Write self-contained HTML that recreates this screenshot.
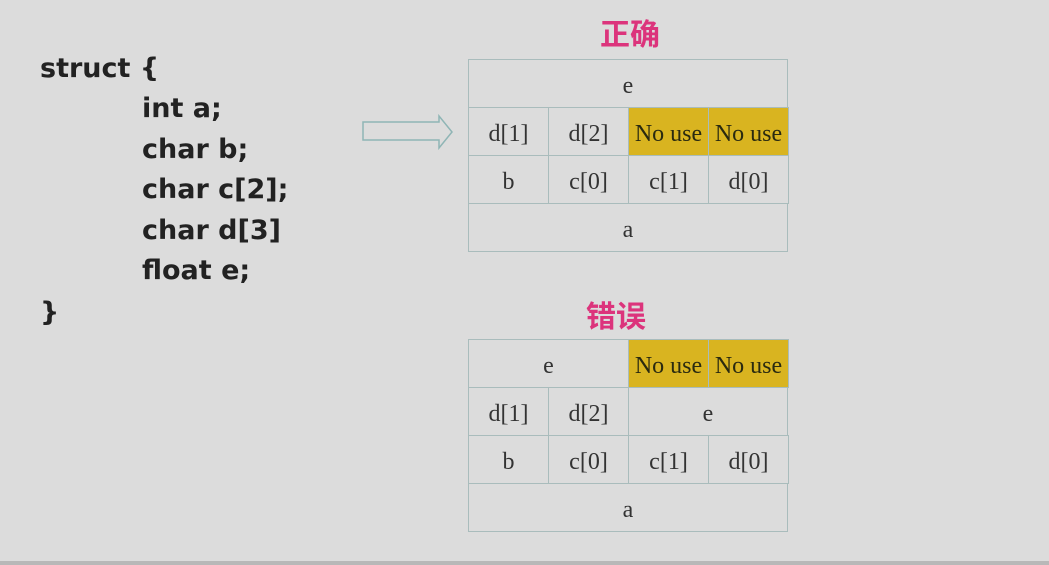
<!DOCTYPE html>
<html><head><meta charset="utf-8"><style>
body{margin:0;width:1049px;height:565px;background:#dcdcdc;position:relative;overflow:hidden}
.c{position:absolute;font-family:"DejaVu Sans","Liberation Sans",sans-serif;font-weight:bold;font-size:27px;color:#222;line-height:30px;white-space:nowrap}
.cell{position:absolute;box-sizing:border-box;border:1px solid #a9bcbc;font-family:"Liberation Serif",serif;font-size:24px;color:#333;display:flex;align-items:center;justify-content:center;white-space:nowrap;padding-top:5px}
.y{background:#d9b420;color:#2a2a10}
.t{position:absolute;font-family:"Noto Sans CJK SC",sans-serif;font-weight:bold;font-size:30px;color:#dc347c}
.foot{position:absolute;left:0;top:561px;width:1049px;height:4px;background:#b8b8b8}
</style></head><body>
<div class="c" style="left:40px;top:54px">struct {</div>
<div class="c" style="left:142px;top:94px">int a;</div>
<div class="c" style="left:142px;top:135px">char b;</div>
<div class="c" style="left:142px;top:175px">char c[2];</div>
<div class="c" style="left:142px;top:216px">char d[3]</div>
<div class="c" style="left:142px;top:256px">float e;</div>
<div class="c" style="left:40px;top:298px">}</div>

<svg style="position:absolute;left:360px;top:112px" width="95" height="40">
<path d="M3 10 H79 V4 L92 20 L79 36 V28 H3 Z" fill="none" stroke="#8fb5b5" stroke-width="1.5"/>
</svg>

<div class="t" style="left:600px;top:10px">正确</div>
<div class="cell" style="left:468px;top:59px;width:320px;height:49px">e</div>
<div class="cell" style="left:468px;top:107px;width:81px;height:49px">d[1]</div>
<div class="cell" style="left:548px;top:107px;width:81px;height:49px">d[2]</div>
<div class="cell y" style="left:628px;top:107px;width:81px;height:49px">No use</div>
<div class="cell y" style="left:708px;top:107px;width:81px;height:49px">No use</div>
<div class="cell" style="left:468px;top:155px;width:81px;height:49px">b</div>
<div class="cell" style="left:548px;top:155px;width:81px;height:49px">c[0]</div>
<div class="cell" style="left:628px;top:155px;width:81px;height:49px">c[1]</div>
<div class="cell" style="left:708px;top:155px;width:81px;height:49px">d[0]</div>
<div class="cell" style="left:468px;top:203px;width:320px;height:49px">a</div>

<div class="t" style="left:586px;top:292px">错误</div>
<div class="cell" style="left:468px;top:339px;width:161px;height:49px">e</div>
<div class="cell y" style="left:628px;top:339px;width:81px;height:49px">No use</div>
<div class="cell y" style="left:708px;top:339px;width:81px;height:49px">No use</div>
<div class="cell" style="left:468px;top:387px;width:81px;height:49px">d[1]</div>
<div class="cell" style="left:548px;top:387px;width:81px;height:49px">d[2]</div>
<div class="cell" style="left:628px;top:387px;width:160px;height:49px">e</div>
<div class="cell" style="left:468px;top:435px;width:81px;height:49px">b</div>
<div class="cell" style="left:548px;top:435px;width:81px;height:49px">c[0]</div>
<div class="cell" style="left:628px;top:435px;width:81px;height:49px">c[1]</div>
<div class="cell" style="left:708px;top:435px;width:81px;height:49px">d[0]</div>
<div class="cell" style="left:468px;top:483px;width:320px;height:49px">a</div>
<div class="foot"></div>
</body></html>
